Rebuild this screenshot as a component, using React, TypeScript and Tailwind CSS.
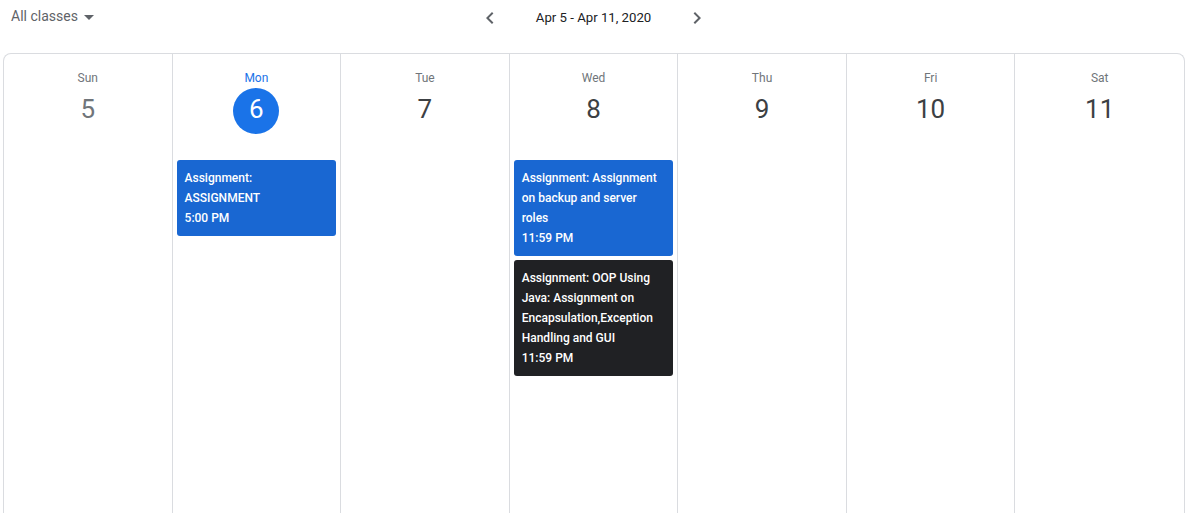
import React from "react";

type Ev = { title: string; time: string; dark?: boolean };
type Day = { label: string; num: number; today?: boolean; past?: boolean; events: Ev[] };

const days: Day[] = [
  { label: "Sun", num: 5, past: true, events: [] },
  {
    label: "Mon",
    num: 6,
    today: true,
    events: [{ title: "Assignment: ASSIGNMENT", time: "5:00 PM" }],
  },
  { label: "Tue", num: 7, events: [] },
  {
    label: "Wed",
    num: 8,
    events: [
      { title: "Assignment: Assignment on backup and server roles", time: "11:59 PM" },
      {
        title: "Assignment: OOP Using Java: Assignment on Encapsulation,Exception Handling and GUI",
        time: "11:59 PM",
        dark: true,
      },
    ],
  },
  { label: "Thu", num: 9, events: [] },
  { label: "Fri", num: 10, events: [] },
  { label: "Sat", num: 11, events: [] },
];

function ChevronLeft() {
  return (
    <svg width="24" height="24" viewBox="0 0 24 24" className="fill-[#5f6368]">
      <path d="M15.41 7.41L14 6l-6 6 6 6 1.41-1.41L10.83 12z" />
    </svg>
  );
}
function ChevronRight() {
  return (
    <svg width="24" height="24" viewBox="0 0 24 24" className="fill-[#5f6368]">
      <path d="M8.59 16.59L10 18l6-6-6-6-1.41 1.41L13.17 12z" />
    </svg>
  );
}

export default function App() {
  return (
    <div className="w-[1203px] h-[513px] overflow-hidden bg-white font-['Roboto','Liberation_Sans',sans-serif]">
      <div className="w-[1187px] h-[53px] grid grid-cols-[1fr_auto_1fr]">
        <div className="flex items-start pl-[11px] pt-[6px]">
          <span className="text-[14px] leading-5 text-[#5f6368]">All classes</span>
          <svg width="24" height="24" viewBox="0 0 24 24" className="fill-[#5f6368] -mt-[1px] ml-[-1px]">
            <path d="M7 10l5 5 5-5z" />
          </svg>
        </div>
        <div className="flex items-center h-[35px] gap-[34px]">
          <ChevronLeft />
          <span className="text-[13.2px] text-[#202124] leading-5">Apr 5 - Apr 11, 2020</span>
          <ChevronRight />
        </div>
        <div />
      </div>
      <div className="ml-[3px] w-[1182px] h-[480px] border border-b-0 border-[#dadce0] rounded-t-lg grid grid-cols-7 divide-x divide-[#dadce0]">
        {days.map((d) => (
          <div key={d.label} className="flex flex-col items-stretch">
            <div className="flex flex-col items-center pt-[16px]">
              <span
                className={
                  "text-[12px] leading-4 " + (d.today ? "text-[#1a73e8]" : "text-[#70757a]")
                }
              >
                {d.label}
              </span>
              <div
                className={
                  "mt-[2px] w-[46px] h-[46px] flex items-center justify-center pb-[4px] rounded-full text-[26px] " +
                  (d.today
                    ? "bg-[#1a73e8] text-white"
                    : d.past
                    ? "text-[#70757a]"
                    : "text-[#3c4043]")
                }
              >
                {d.num}
              </div>
            </div>
            <div className="mt-[26px] px-1 flex flex-col gap-1">
              {d.events.map((e, i) => (
                <div
                  key={i}
                  className={
                    "rounded-[3px] px-2 py-2 text-white text-[12px] leading-5 font-medium " +
                    (e.dark ? "bg-[#202124]" : "bg-[#1967d2]")
                  }
                >
                  <div>{e.title}</div>
                  <div>{e.time}</div>
                </div>
              ))}
            </div>
          </div>
        ))}
      </div>
    </div>
  );
}
